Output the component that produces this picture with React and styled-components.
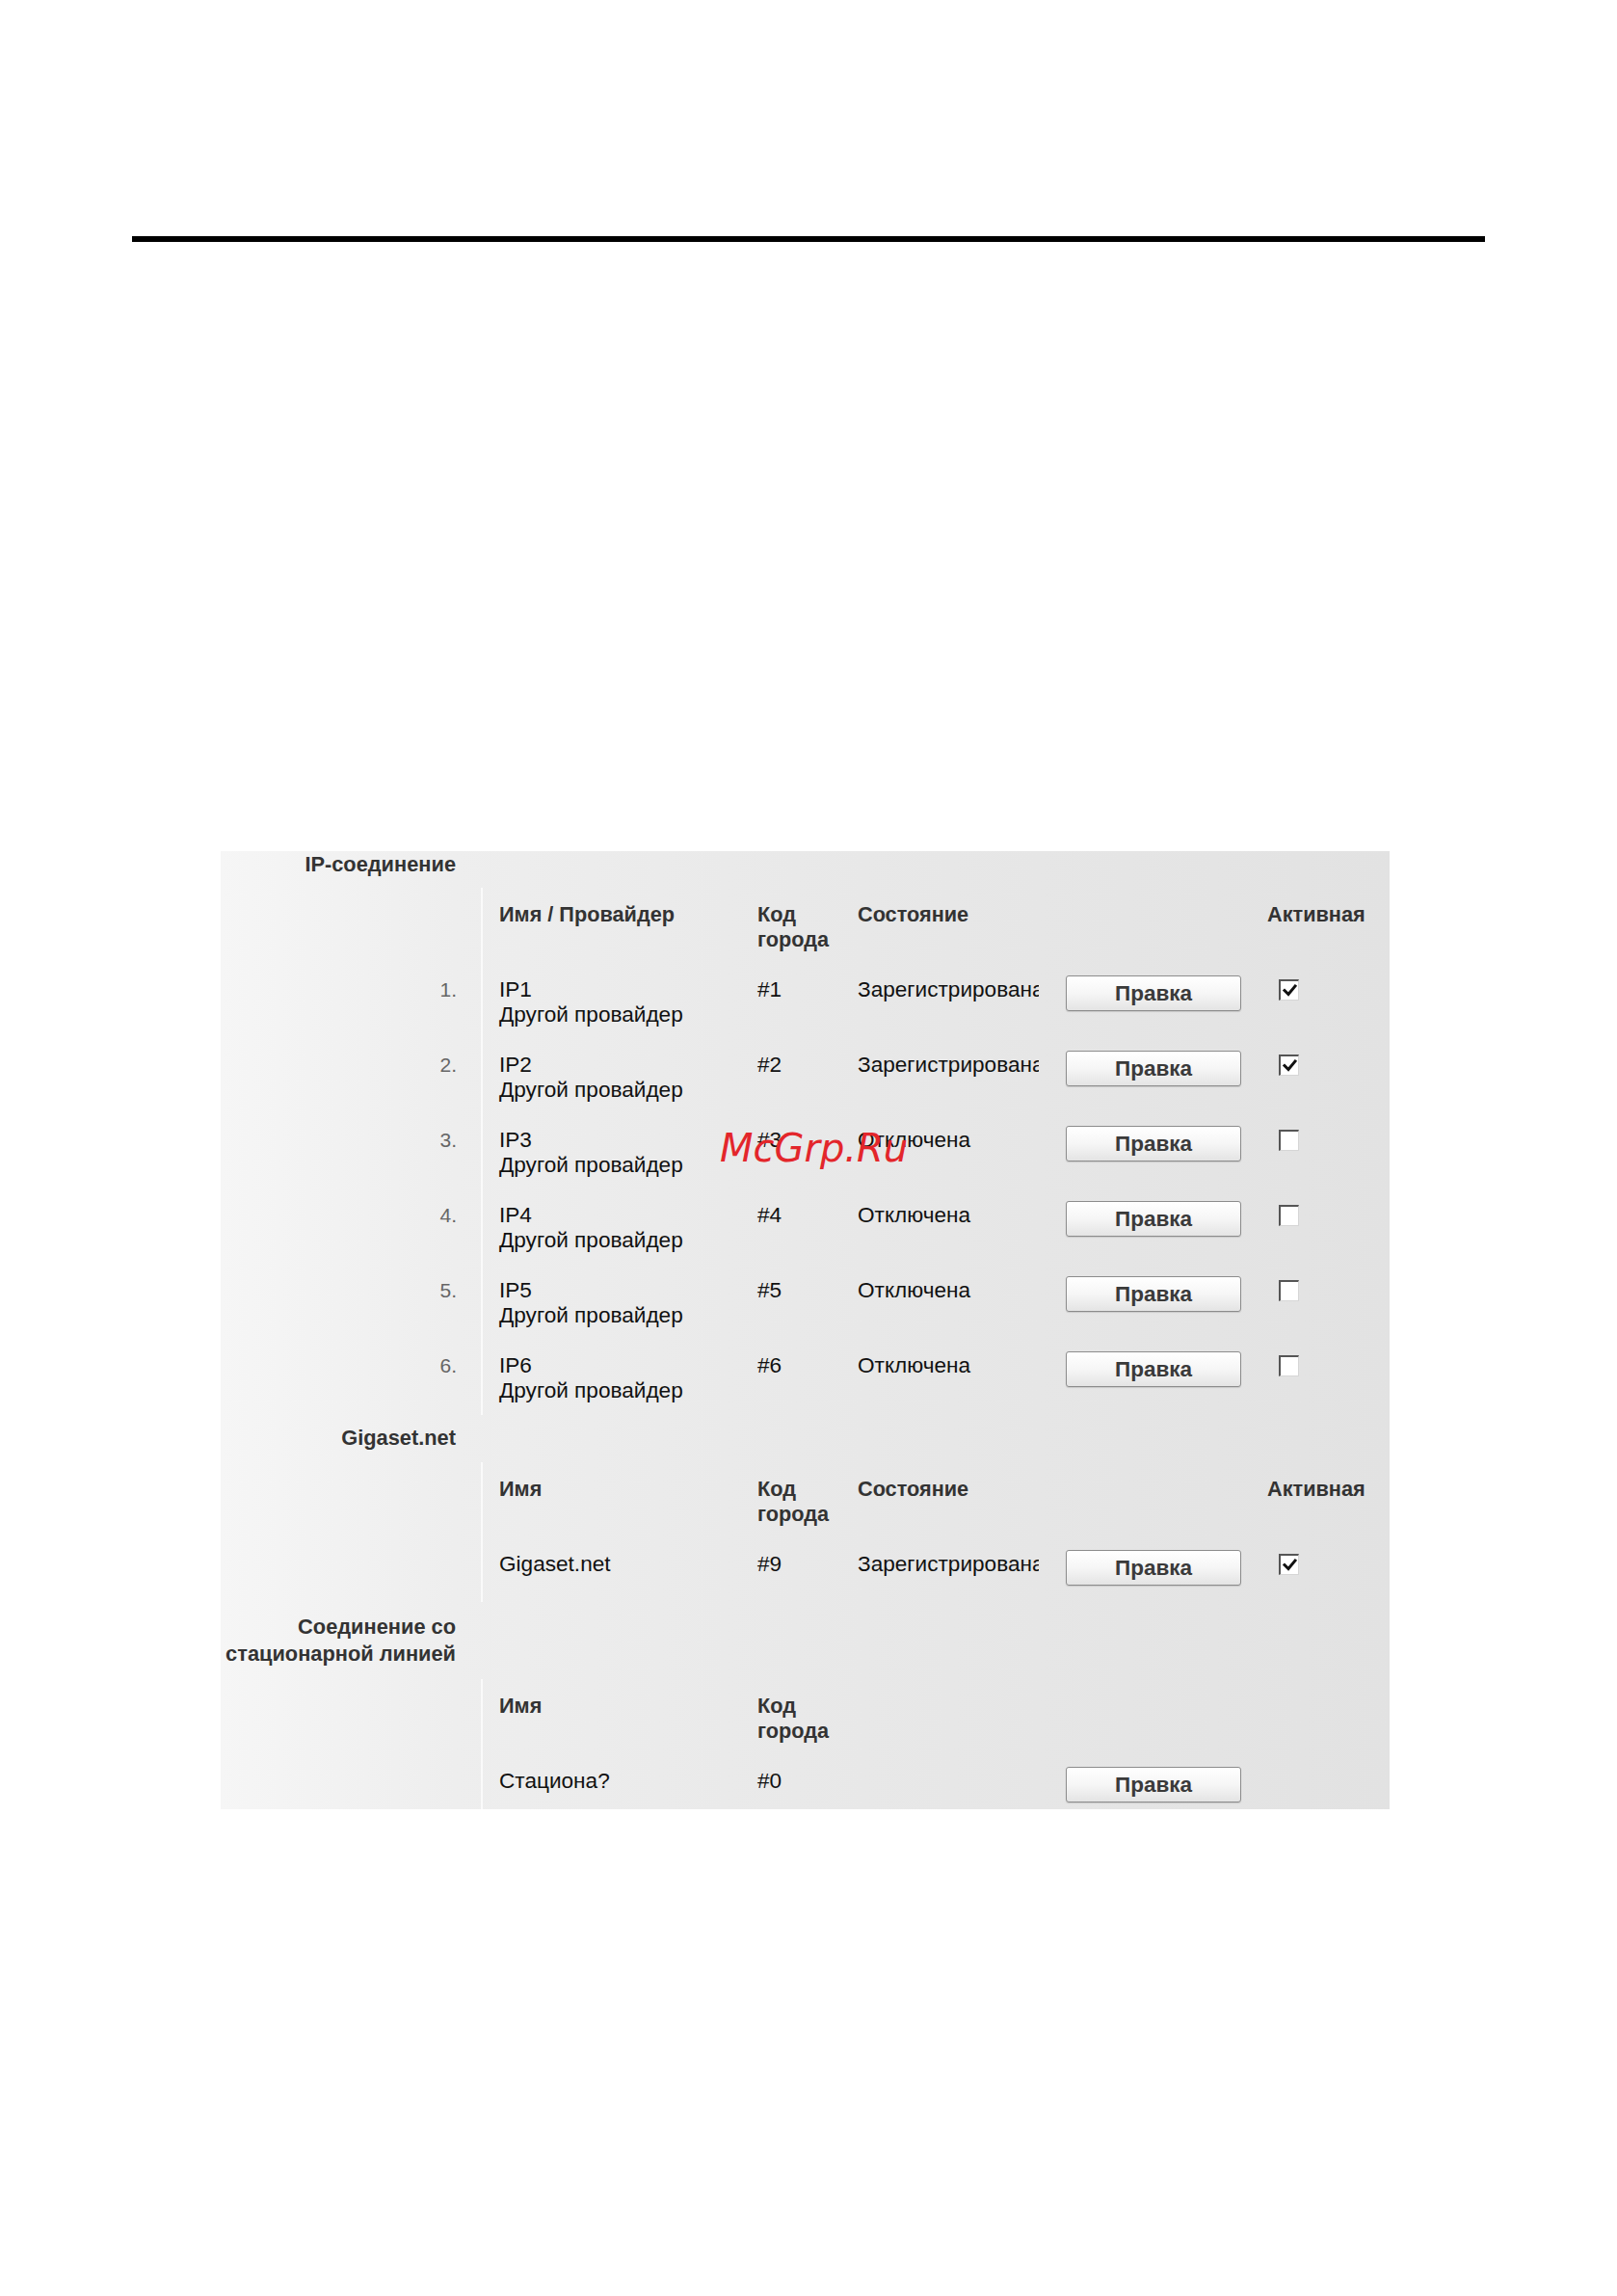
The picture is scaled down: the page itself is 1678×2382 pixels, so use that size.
import styled, { createGlobalStyle } from "styled-components";

const GlobalStyle = createGlobalStyle`
  html, body {
    margin: 0;
    padding: 0;
    background: #ffffff;
  }
  body {
    font-family: "Liberation Sans", Arial, sans-serif;
    font-size: 22.6px;
    color: #111;
  }
`;

const ipRows = [
  { n: 1, name: "IP1", code: "#1", state: "Зарегистрирована", active: true },
  { n: 2, name: "IP2", code: "#2", state: "Зарегистрирована", active: true },
  { n: 3, name: "IP3", code: "#3", state: "Отключена", active: false },
  { n: 4, name: "IP4", code: "#4", state: "Отключена", active: false },
  { n: 5, name: "IP5", code: "#5", state: "Отключена", active: false },
  { n: 6, name: "IP6", code: "#6", state: "Отключена", active: false },
];

const CheckBox = ({ checked }) => (
  <Box>
    {checked && (
      <svg width="17" height="17" viewBox="0 0 17 17">
        <path
          d="M3 8.5 L7 12.5 L14 4"
          fill="none"
          stroke="#111"
          strokeWidth="3"
          strokeLinecap="square"
        />
      </svg>
    )}
  </Box>
);

const Row = ({ pt = 26, index, children }) => (
  <RowGrid $pt={pt}>
    <Index>{index}</Index>
    <Sep />
    {children}
  </RowGrid>
);

const App = () => {
  return (
    <Page>
      <GlobalStyle />
      <Rule />
      <Panel>
        <Watermark>McGrp.Ru</Watermark>

        <SectionTitle $mt={0}>IP-соединение</SectionTitle>
        <Gap $h={10} />
        <Row pt={15}>
          <Head $pl={17}>Имя / Провайдер</Head>
          <Head>
            Код
            <br />
            города
          </Head>
          <Head>Состояние</Head>
          <Cell />
          <Head $pl={27}>Активная</Head>
        </Row>
        {ipRows.map((r) => (
          <Row key={r.n} index={`${r.n}.`}>
            <Name>
              {r.name}
              <br />
              Другой провайдер
            </Name>
            <Cell>{r.code}</Cell>
            <State>{r.state}</State>
            <Cell>
              <EditButton>Правка</EditButton>
            </Cell>
            <ActiveCell>
              <CheckBox checked={r.active} />
            </ActiveCell>
          </Row>
        ))}
        <Tail $h={12} />

        <SectionTitle $mt={10}>Gigaset.net</SectionTitle>
        <Gap $h={11} />
        <Row pt={15}>
          <Head $pl={17}>Имя</Head>
          <Head>
            Код
            <br />
            города
          </Head>
          <Head>Состояние</Head>
          <Cell />
          <Head $pl={27}>Активная</Head>
        </Row>
        <Row>
          <Name $minH={52}>Gigaset.net</Name>
          <Cell>#9</Cell>
          <State>Зарегистрирована</State>
          <Cell>
            <EditButton>Правка</EditButton>
          </Cell>
          <ActiveCell>
            <CheckBox checked />
          </ActiveCell>
        </Row>

        <SectionTitle $mt={12}>
          Соединение со
          <br />
          стационарной линией
        </SectionTitle>
        <Gap $h={12} />
        <Row pt={15}>
          <Head $pl={17}>Имя</Head>
          <Head>
            Код
            <br />
            города
          </Head>
          <Cell />
          <Cell />
          <Cell />
        </Row>
        <Row>
          <Name>Стациона?</Name>
          <Cell>#0</Cell>
          <Cell />
          <Cell>
            <EditButton>Правка</EditButton>
          </Cell>
          <Cell />
        </Row>
        <Tail $h={7} />
      </Panel>
    </Page>
  );
};

const Page = styled.div`
  min-height: 2382px;
  padding-top: 245px;
  box-sizing: border-box;
`;

const Rule = styled.div`
  margin-left: 137px;
  width: 1404px;
  height: 6px;
  background: #000;
`;

const Panel = styled.div`
  position: relative;
  margin: 632px 0 0 229px;
  width: 1213px;
  background: linear-gradient(
    90deg,
    #f6f6f6 0%,
    #eeeeee 20%,
    #e8e8e8 55%,
    #e2e2e2 100%
  );
  line-height: 26px;
`;

const SectionTitle = styled.div`
  width: 270px;
  box-sizing: border-box;
  padding-right: 26px;
  padding-top: ${({ $mt }) => $mt}px;
  text-align: right;
  font-weight: bold;
  font-size: 21.8px;
  line-height: 28px;
  color: #333;
`;

const Gap = styled.div`
  height: ${({ $h }) => $h}px;
`;

const Tail = styled.div`
  height: ${({ $h }) => $h}px;
  margin-left: 270px;
  border-left: 2px solid #fafafa;
`;

const RowGrid = styled.div`
  display: grid;
  grid-template-columns: 270px 2px 285px 104px 216px 182px 1fr;
  & > * {
    padding-top: ${({ $pt }) => $pt}px;
  }
`;

const Index = styled.div`
  padding-right: 25px;
  text-align: right;
  font-size: 21px;
  color: #666;
`;

const Sep = styled.div`
  background: #fafafa;
`;

const Cell = styled.div`
  min-width: 0;
`;

const Head = styled.div`
  font-weight: bold;
  font-size: 21.7px;
  color: #333;
  padding-left: ${({ $pl }) => $pl || 0}px;
`;

const Name = styled.div`
  padding-left: 17px;
  min-height: ${({ $minH }) => $minH || 0}px;
`;

const State = styled.div`
  width: 188px;
  overflow: hidden;
  white-space: nowrap;
`;

const ActiveCell = styled.div`
  padding-left: 39px;
`;

const EditButton = styled.div`
  margin-top: -2px;
  width: 182px;
  height: 37px;
  box-sizing: border-box;
  border: 1px solid #8c8c8c;
  border-radius: 3px;
  background: linear-gradient(#ffffff 0%, #f6f6f6 50%, #e4e4e4 100%);
  box-shadow: 0 1px 1px rgba(0, 0, 0, 0.12);
  display: flex;
  align-items: center;
  justify-content: center;
  font-weight: bold;
  font-size: 22.5px;
  color: #3a3a3a;
`;

const Box = styled.span`
  display: flex;
  align-items: center;
  justify-content: center;
  margin-top: 2px;
  width: 21px;
  height: 22px;
  box-sizing: border-box;
  background: #fff;
  border-top: 2px solid #555;
  border-left: 2px solid #555;
  border-right: 1px solid #d6d6d6;
  border-bottom: 1px solid #d6d6d6;
`;

const Watermark = styled.div`
  position: absolute;
  left: 518px;
  top: 288px;
  font-family: "DejaVu Sans", sans-serif;
  font-style: italic;
  font-size: 40px;
  line-height: 40px;
  color: #e3262b;
  pointer-events: none;
`;

export default App;
